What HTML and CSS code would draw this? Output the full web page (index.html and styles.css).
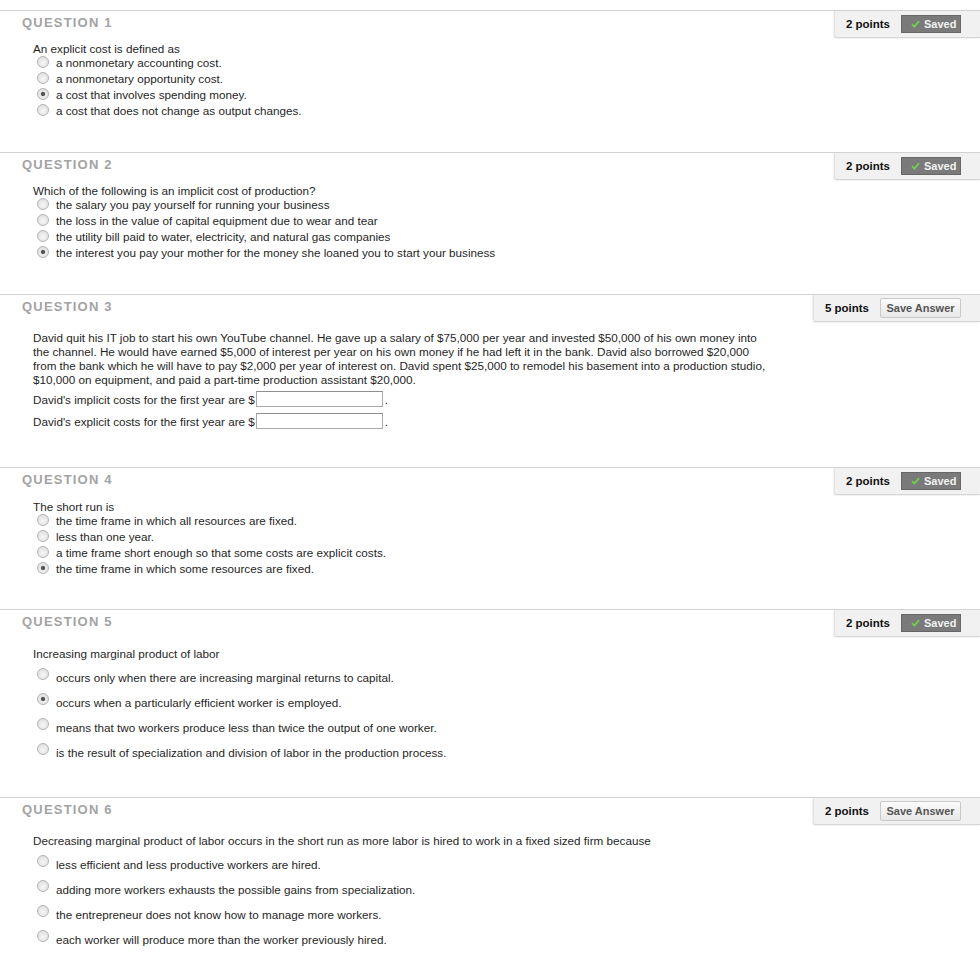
FILE: index.html
```html
<!DOCTYPE html>
<html>
<head>
<meta charset="utf-8">
<link rel="stylesheet" href="styles.css">
</head>
<body>
<div class="page">

<section class="q q-list">
  <div class="q-head">
    <h3 class="q-title">QUESTION 1</h3>
    <div class="points"><span class="pts">2 points</span><span class="btn-saved"><svg class="chk" width="9" height="8" viewBox="0 0 9 8"><path d="M1 4.2 L3.4 6.6 L8 1.2" fill="none" stroke="#6fcf4a" stroke-width="1.8"/></svg>Saved</span></div>
  </div>
  <div class="q-body">
    <div class="q-text">An explicit cost is defined as</div>
    <ul class="opts">
      <li><span class="radio"></span>a nonmonetary accounting cost.</li>
      <li><span class="radio"></span>a nonmonetary opportunity cost.</li>
      <li><span class="radio on"></span>a cost that involves spending money.</li>
      <li><span class="radio"></span>a cost that does not change as output changes.</li>
    </ul>
  </div>
</section>

<section class="q q-list">
  <div class="q-head">
    <h3 class="q-title">QUESTION 2</h3>
    <div class="points"><span class="pts">2 points</span><span class="btn-saved"><svg class="chk" width="9" height="8" viewBox="0 0 9 8"><path d="M1 4.2 L3.4 6.6 L8 1.2" fill="none" stroke="#6fcf4a" stroke-width="1.8"/></svg>Saved</span></div>
  </div>
  <div class="q-body">
    <div class="q-text">Which of the following is an implicit cost of production?</div>
    <ul class="opts">
      <li><span class="radio"></span>the salary you pay yourself for running your business</li>
      <li><span class="radio"></span>the loss in the value of capital equipment due to wear and tear</li>
      <li><span class="radio"></span>the utility bill paid to water, electricity, and natural gas companies</li>
      <li><span class="radio on"></span>the interest you pay your mother for the money she loaned you to start your business</li>
    </ul>
  </div>
</section>

<section class="q q-fill">
  <div class="q-head">
    <h3 class="q-title">QUESTION 3</h3>
    <div class="points"><span class="pts">5 points</span><span class="btn-save">Save Answer</span></div>
  </div>
  <div class="q-body">
    <p class="q-para">David quit his IT job to start his own YouTube channel. He gave up a salary of $75,000 per year and invested $50,000 of his own money into the channel. He would have earned $5,000 of interest per year on his own money if he had left it in the bank. David also borrowed $20,000 from the bank which he will have to pay $2,000 per year of interest on. David spent $25,000 to remodel his basement into a production studio, $10,000 on equipment, and paid a part-time production assistant $20,000.</p>
    <div class="fill-row">David's implicit costs for the first year are $<span class="inp"></span>.</div>
    <div class="fill-row">David's explicit costs for the first year are $<span class="inp"></span>.</div>
  </div>
</section>

<section class="q q-list">
  <div class="q-head">
    <h3 class="q-title">QUESTION 4</h3>
    <div class="points"><span class="pts">2 points</span><span class="btn-saved"><svg class="chk" width="9" height="8" viewBox="0 0 9 8"><path d="M1 4.2 L3.4 6.6 L8 1.2" fill="none" stroke="#6fcf4a" stroke-width="1.8"/></svg>Saved</span></div>
  </div>
  <div class="q-body q4">
    <div class="q-text">The short run is</div>
    <ul class="opts">
      <li><span class="radio"></span>the time frame in which all resources are fixed.</li>
      <li><span class="radio"></span>less than one year.</li>
      <li><span class="radio"></span>a time frame short enough so that some costs are explicit costs.</li>
      <li><span class="radio on"></span>the time frame in which some resources are fixed.</li>
    </ul>
  </div>
</section>

<section class="q q-wide q5">
  <div class="q-head">
    <h3 class="q-title">QUESTION 5</h3>
    <div class="points"><span class="pts">2 points</span><span class="btn-saved"><svg class="chk" width="9" height="8" viewBox="0 0 9 8"><path d="M1 4.2 L3.4 6.6 L8 1.2" fill="none" stroke="#6fcf4a" stroke-width="1.8"/></svg>Saved</span></div>
  </div>
  <div class="q-body">
    <div class="q-text">Increasing marginal product of labor</div>
    <ul class="opts">
      <li><span class="radio"></span>occurs only when there are increasing marginal returns to capital.</li>
      <li><span class="radio on"></span>occurs when a particularly efficient worker is employed.</li>
      <li><span class="radio"></span>means that two workers produce less than twice the output of one worker.</li>
      <li><span class="radio"></span>is the result of specialization and division of labor in the production process.</li>
    </ul>
  </div>
</section>

<section class="q q-wide q6">
  <div class="q-head">
    <h3 class="q-title">QUESTION 6</h3>
    <div class="points"><span class="pts">2 points</span><span class="btn-save">Save Answer</span></div>
  </div>
  <div class="q-body">
    <div class="q-text">Decreasing marginal product of labor occurs in the short run as more labor is hired to work in a fixed sized firm because</div>
    <ul class="opts">
      <li><span class="radio"></span>less efficient and less productive workers are hired.</li>
      <li><span class="radio"></span>adding more workers exhausts the possible gains from specialization.</li>
      <li><span class="radio"></span>the entrepreneur does not know how to manage more workers.</li>
      <li><span class="radio"></span>each worker will produce more than the worker previously hired.</li>
    </ul>
  </div>
</section>

</div>
</body>
</html>
```

FILE: styles.css
```css
html, body {
  margin: 0;
  padding: 0;
  background: #fff;
}
body {
  font-family: "Liberation Sans", Arial, sans-serif;
  font-size: 11.7px;
  color: #1f1f1f;
}
.page {
  padding-top: 10px;
}
.q {
  border-top: 1px solid #d2d2d2;
}
.q-head {
  display: flex;
  justify-content: space-between;
  align-items: flex-start;
  height: 27px;
}
.q-title {
  margin: 0;
  padding: 4px 0 0 22px;
  font-size: 13px;
  line-height: 15px;
  font-weight: bold;
  letter-spacing: 1.2px;
  color: #a3a3a3;
}
.points {
  display: flex;
  align-items: center;
  gap: 11px;
  height: 27px;
  padding: 0 19px 0 11px;
  background: #f1f1f1;
  border-left: 1px solid #e2e2e2;
  border-bottom: 1px solid #d6d6d6;
  border-bottom-left-radius: 3px;
  box-shadow: -1px 1px 1px rgba(0,0,0,0.06);
  box-sizing: border-box;
}
.pts {
  font-weight: bold;
  font-size: 11.5px;
  color: #111;
}
.btn-saved {
  display: flex;
  align-items: center;
  gap: 4px;
  box-sizing: border-box;
  width: 60px;
  height: 18px;
  padding-left: 9px;
  background: #7a7a7a;
  border: 1px solid #666;
  color: #f2f2f2;
  font-size: 11px;
  font-weight: bold;
}
.chk {
  display: block;
}
.btn-save {
  display: flex;
  align-items: center;
  justify-content: center;
  box-sizing: border-box;
  width: 81px;
  height: 20px;
  background: linear-gradient(#fbfbfb, #e8e8e8);
  border: 1px solid #c9c9c9;
  border-radius: 2px;
  color: #555;
  font-size: 11px;
  font-weight: bold;
}
.q-body {
  padding-left: 33px;
}
.q-text {
  line-height: 14px;
}
.opts {
  list-style: none;
  margin: 0;
  padding: 0 0 0 4px;
}
.opts li {
  display: flex;
  align-items: center;
}
.radio {
  flex: none;
  box-sizing: border-box;
  width: 12px;
  height: 12px;
  margin-right: 7px;
  border-radius: 50%;
  border: 1px solid #b4b4b4;
  background: radial-gradient(circle at 50% 60%, #f6f6f6 0%, #e2e2e2 70%, #d4d4d4 100%);
  display: flex;
  align-items: center;
  justify-content: center;
}
.radio.on::after {
  content: "";
  width: 4px;
  height: 4px;
  border-radius: 50%;
  background: #505050;
  box-shadow: 0 0 1px #777;
}

/* list style (questions 1, 2, 4) */
.q-list .q-body {
  margin-top: 4px;
  padding-bottom: 34px;
}
.q-list .opts {
  margin-top: -2px;
}
.q-list .opts li {
  height: 16px;
}
.q4 {
  padding-top: 1px;
}
.q-list .q4 {
  padding-bottom: 33px;
}

/* fill in the blank (question 3) */
.q-fill .q-body {
  margin-top: 9px;
  padding-bottom: 35px;
}
.q-para {
  margin: 0;
  line-height: 14px;
  width: 736px;
}
.fill-row {
  margin-top: 1px;
  height: 22px;
  display: flex;
  align-items: center;
}
.fill-row + .fill-row {
  margin-top: 0;
}
.inp {
  display: inline-block;
  box-sizing: border-box;
  width: 127px;
  height: 16px;
  margin-left: 1px;
  margin-right: 2px;
  border: 1px solid #a9a9a9;
  border-top-color: #8f8f8f;
  background: #fff;
}

/* wide spaced options (questions 5, 6) */
.q-wide .q-body {
  padding-bottom: 32px;
}
.q5 .q-body {
  margin-top: 10px;
}
.q6 .q-body {
  margin-top: 9px;
}
.q-wide .opts {
  margin-top: 4px;
}
.q-wide .opts li {
  height: 25px;
}
.q-wide .radio {
  margin-bottom: 8px;
}
```
